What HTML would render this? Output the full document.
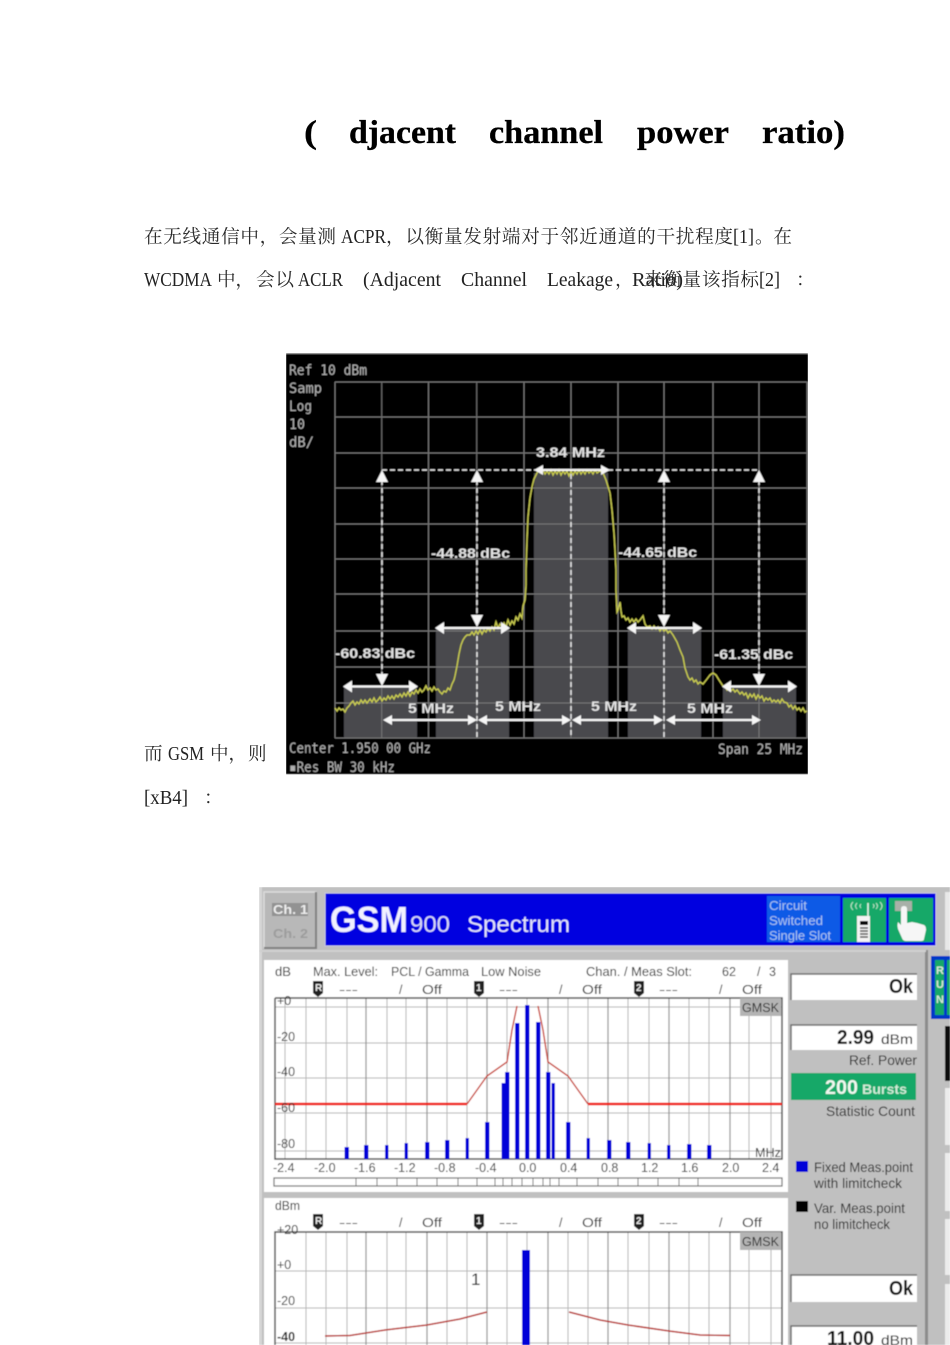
<!DOCTYPE html>
<html><head><meta charset="utf-8"><title>ACPR</title>
<style>
html,body{margin:0;padding:0;background:#fff;width:950px;height:1345px;overflow:hidden}
svg{display:block;position:absolute;left:0;top:0}
.t{font-family:"Liberation Serif","Noto Serif CJK SC",serif;font-size:20px;fill:#222}
.c{font-family:"Noto Serif CJK SC","Liberation Serif",serif;font-size:18.6px;fill:#2a2a2a}
.h{font-family:"Liberation Serif",serif;font-weight:bold;font-size:33px;fill:#000;stroke:#000;stroke-width:.3}
.m{font-family:"DejaVu Sans Mono",monospace;font-size:14px;fill:#b0b0b0}
.b{font-family:"Liberation Sans",sans-serif;font-weight:bold;font-size:14px;fill:#e4e4e4}
.s{font-family:"Liberation Sans",sans-serif;font-size:12.5px;fill:#2c2c2c}
.v{font-family:"Liberation Sans",sans-serif;font-weight:bold;fill:#111}
</style></head><body>
<svg width="950" height="1345" viewBox="0 0 950 1345" xmlns="http://www.w3.org/2000/svg">
<defs>
<filter id="bl" x="0" y="0" width="1" height="1"><feGaussianBlur stdDeviation="0.5"/></filter>
<filter id="bk" x="0" y="0" width="1" height="1"><feGaussianBlur stdDeviation="0.4"/></filter>
<filter id="bs" x="-2%" y="-2%" width="104%" height="104%"><feGaussianBlur stdDeviation="0.3"/></filter>
</defs>

<!-- page text -->
<g filter="url(#bs)">
<text class="h" x="304" y="143" textLength="13" lengthAdjust="spacingAndGlyphs">(</text>
<text class="h" x="349" y="143" textLength="107" lengthAdjust="spacingAndGlyphs">djacent</text>
<text class="h" x="489" y="143" textLength="114" lengthAdjust="spacingAndGlyphs">channel</text>
<text class="h" x="637" y="143" textLength="92" lengthAdjust="spacingAndGlyphs">power</text>
<text class="h" x="762" y="143" textLength="83" lengthAdjust="spacingAndGlyphs">ratio)</text>

<text class="c" x="144" y="243" textLength="192">在无线通信中，会量测</text>
<text class="t" x="341" y="243" textLength="45" lengthAdjust="spacingAndGlyphs">ACPR</text>
<text class="c" x="386" y="243" textLength="347">，以衡量发射端对于邻近通道的干扰程度</text>
<text class="t" x="733" y="243" textLength="21" lengthAdjust="spacingAndGlyphs">[1]</text>
<text class="c" x="755" y="243" textLength="37">。在</text>

<text class="t" x="144" y="286" textLength="68" lengthAdjust="spacingAndGlyphs">WCDMA</text>
<text class="c" x="217" y="286" textLength="37">中，</text>
<text class="c" x="256" y="286" textLength="38">会以</text>
<text class="t" x="298" y="286" textLength="45" lengthAdjust="spacingAndGlyphs">ACLR</text>
<text class="t" x="363" y="286" textLength="78" lengthAdjust="spacingAndGlyphs">(Adjacent</text>
<text class="t" x="461" y="286" textLength="66" lengthAdjust="spacingAndGlyphs">Channel</text>
<text class="t" x="547" y="286" textLength="66" lengthAdjust="spacingAndGlyphs">Leakage</text>
<text class="c" x="615" y="286">，</text>
<text class="t" x="632" y="286" textLength="51" lengthAdjust="spacingAndGlyphs">Ratio)</text>
<text class="c" x="644" y="286" textLength="115">来衡量该指标</text>
<text class="t" x="759" y="286" textLength="21" lengthAdjust="spacingAndGlyphs">[2]</text>
<text class="c" x="796" y="286">：</text>

<text class="c" x="144" y="760">而</text>
<text class="t" x="168" y="760" textLength="36" lengthAdjust="spacingAndGlyphs">GSM</text>
<text class="c" x="210" y="760" textLength="37">中，</text>
<text class="c" x="248" y="760">则</text>
<text class="t" x="144" y="804" textLength="44" lengthAdjust="spacingAndGlyphs">[xB4]</text>
<text class="c" x="204" y="804">：</text>
</g>

<!-- chart 1 -->
<g filter="url(#bl)">
<rect x="286" y="353" width="522" height="421" fill="#000"/>
<rect x="286" y="353" width="522" height="1" fill="#888"/>
<g fill="#48494e">
<rect x="534" y="473" width="74" height="265"/>
<rect x="436" y="628" width="73" height="110"/>
<rect x="628" y="628" width="73" height="110"/>
<rect x="344" y="686" width="73" height="52"/>
<rect x="723" y="686" width="73" height="52"/>
</g>
<g stroke="#787878" stroke-width="1" fill="none">
<path d="M335 382H807M335 417H807M335 453H807M335 488H807M335 524H807M335 559H807M335 594H807M335 631H807M335 667H807M335 703H807M335 738H807"/>
<path d="M335 382V738M381.7 382V738M428.5 382V738M476.7 382V738M524 382V738M571 382V738M618 382V738M664 382V738M713 382V738M759 382V738M807 382V738"/>
</g>
<!-- dashed -->
<g stroke="#e8e8e8" stroke-width="1.5" fill="none" stroke-dasharray="5 3">
<path d="M382 470H535M608 470H759"/>
<path d="M382 480V678M477 480V620M664 480V620M759 480V678"/>
<path d="M571 474V738M477 636V738M664 636V738"/>
</g>
<!-- trace -->
<polyline fill="none" stroke="#c8ca50" stroke-width="1.4" points="335,708 337,711 339,708 341,710 343,709 345,712 347,708 349,706 351,703 353,701 355,705 357,702 359,704 361,700 363,703 365,700 367,703 370,699 372,702 374,698 376,702 378,700 380,697 382,701 384,698 386,700 388,696 390,699 392,696 394,699 396,695 398,697 400,694 402,697 404,693 406,696 408,692 410,696 412,692 414,694 416,690 418,693 420,689 422,692 424,690 426,686 428,690 430,688 432,691 434,687 436,690 438,689 440,692 442,694 444,691 446,692 448,688 450,690 452,684 454,680 455,676 457,666 459,654 461,645 463,640 465,637 467,635 470,635 472,632 474,635 476,631 478,634 480,630 482,634 484,630 486,632 488,628 490,631 492,627 494,630 496,622 498,628 500,624 502,627 504,623 506,627 508,620 510,625 512,621 514,624 516,617 518,620 520,614 522,618 523,606 525,600 526,585 526,570 527,540 528,517 530,498 532,487 534,479 537,473 539,470 541,473 543,470 545,474 547,471 549,474 551,470 553,475 555,471 557,474 559,470 561,475 563,471 565,474 567,471 569,476 571,471 573,475 575,471 577,474 579,470 581,474 583,471 585,474 587,470 589,473 591,471 593,474 595,470 597,473 600,471 603,473 606,480 610,493 612,510 614,533 615,550 616,570 616,590 617,612 618,610 620,602 621,611 622,617 624,616 626,620 628,618 630,622 632,619 634,622 636,619 638,622 640,620 643,616 645,624 647,627 650,626 652,629 654,626 656,629 658,627 660,631 662,628 664,631 666,629 668,633 670,631 673,635 677,642 680,650 683,657 685,668 688,677 690,680 692,678 694,682 696,680 698,684 700,682 703,684 707,679 710,675 713,673 716,675 719,680 723,686 725,686 727,690 729,687 731,691 733,689 735,692 737,690 740,694 742,692 744,695 746,693 748,698 750,694 752,697 754,694 756,699 758,695 760,698 762,696 764,701 766,698 768,700 770,698 772,702 774,700 776,702 778,700 780,703 782,699 784,702 787,703 789,707 791,705 793,709 795,706 797,710 799,708 801,711 803,708 805,712 807,711"/>
<!-- arrows -->
<g stroke="#f6f6f6" stroke-width="2.2" fill="#f6f6f6">
<path d="M540 470H604M441 628H504M633 628H696M349 686.5H412M728 686.5H791M389 720H471M483 720H565M578 720H657M672 720H755"/>
<g stroke="none">
<path d="M534 470l9-5v10zM610 470l-9-5v10zM435 628l9-6v12zM510 628l-9-6v12zM627 628l9-6v12zM702 628l-9-6v12zM343 686.5l9-6v12zM418 686.5l-9-6v12zM722 686.5l9-6v12zM797 686.5l-9-6v12z"/>
<path d="M383 720l9-5v10zM477 720l-9-5v10zM478 720l9-5v10zM571 720l-9-5v10zM572 720l9-5v10zM663 720l-9-5v10zM666 720l9-5v10zM761 720l-9-5v10z"/>
<path d="M382 470l-6 12h12zM477 470l-6 12h12zM664 470l-6 12h12zM759 470l-6 12h12z"/>
<path d="M382 686l-6-12h12zM477 627l-6-12h12zM664 627l-6-12h12zM759 686l-6-12h12z"/>
</g>
</g>
<g>
<text class="m" x="289" y="375" textLength="78" lengthAdjust="spacingAndGlyphs">Ref 10 dBm</text>
<text class="m" x="289" y="393" textLength="33" lengthAdjust="spacingAndGlyphs">Samp</text>
<text class="m" x="289" y="411" textLength="23" lengthAdjust="spacingAndGlyphs">Log</text>
<text class="m" x="289" y="429" textLength="16" lengthAdjust="spacingAndGlyphs">10</text>
<text class="m" x="289" y="447" textLength="25" lengthAdjust="spacingAndGlyphs">dB/</text>
<text class="m" x="289" y="753" textLength="142" lengthAdjust="spacingAndGlyphs">Center 1.950 00 GHz</text>
<text class="m" x="289" y="772" textLength="106" lengthAdjust="spacingAndGlyphs">▪Res BW 30 kHz</text>
<text class="m" x="718" y="754" textLength="85" lengthAdjust="spacingAndGlyphs">Span 25 MHz</text>
<text class="b" x="536" y="457" textLength="69" lengthAdjust="spacingAndGlyphs">3.84 MHz</text>
<text class="b" x="431" y="558" textLength="79" lengthAdjust="spacingAndGlyphs">-44.88 dBc</text>
<text class="b" x="618" y="557" textLength="79" lengthAdjust="spacingAndGlyphs">-44.65 dBc</text>
<text class="b" x="335" y="658" textLength="80" lengthAdjust="spacingAndGlyphs">-60.83 dBc</text>
<text class="b" x="714" y="659" textLength="79" lengthAdjust="spacingAndGlyphs">-61.35 dBc</text>
<text class="b" x="408" y="713" textLength="46" lengthAdjust="spacingAndGlyphs">5 MHz</text>
<text class="b" x="495" y="711" textLength="46" lengthAdjust="spacingAndGlyphs">5 MHz</text>
<text class="b" x="591" y="711" textLength="46" lengthAdjust="spacingAndGlyphs">5 MHz</text>
<text class="b" x="687" y="713" textLength="46" lengthAdjust="spacingAndGlyphs">5 MHz</text>
</g>
</g>

<!-- chart 2 -->
<g filter="url(#bk)">
<rect x="259" y="887" width="691" height="458" fill="#c0c0c0"/>
<rect x="259" y="887" width="3" height="458" fill="#d6d6d6"/>
<!-- top row -->
<rect x="264" y="892" width="52" height="56" fill="#b8b8b8" stroke="#dcdcdc" stroke-width="1.5"/>
<path d="M316 892V948H264" stroke="#808080" stroke-width="2" fill="none"/>
<rect x="272" y="903" width="36" height="13" fill="#929292"/>
<text class="s" x="273" y="914" textLength="35" lengthAdjust="spacingAndGlyphs" style="font-weight:bold;fill:#eee">Ch. 1</text>
<text class="s" x="273" y="938" textLength="35" lengthAdjust="spacingAndGlyphs" style="font-weight:bold;fill:#9c9c9c">Ch. 2</text>
<rect x="325" y="893" width="611" height="53" fill="#0000e0" stroke="#c8c8e0" stroke-width="1"/>
<text x="330" y="932" textLength="78" lengthAdjust="spacingAndGlyphs" style="font-family:'Liberation Sans',sans-serif;font-weight:bold;font-size:36px;fill:#f0f0ff">GSM</text>
<text x="410" y="932" textLength="40" lengthAdjust="spacingAndGlyphs" style="font-family:'Liberation Sans',sans-serif;font-size:23px;fill:#d8d8f8">900</text>
<text x="467" y="932" textLength="103" lengthAdjust="spacingAndGlyphs" style="font-family:'Liberation Sans',sans-serif;font-size:23px;fill:#e4e4fa">Spectrum</text>
<rect x="767" y="896" width="73" height="46" fill="#0a5ae6"/>
<g style="font-family:'Liberation Sans',sans-serif;font-size:13px;fill:#a8c4f0">
<text x="769" y="910" textLength="38" lengthAdjust="spacingAndGlyphs">Circuit</text>
<text x="769" y="925" textLength="54" lengthAdjust="spacingAndGlyphs">Switched</text>
<text x="769" y="940" textLength="62" lengthAdjust="spacingAndGlyphs">Single Slot</text>
</g>
<rect x="843" y="898" width="43" height="44" fill="#12a868"/>
<rect x="889" y="898" width="44" height="44" fill="#12a868"/>
<path d="M853 902q-4 4 0 8M857 903q-3 3 0 6M861 904q-2 2 0 4M880 902q4 4 0 8M876 903q3 3 0 6M873 904q2 2 0 4" stroke="#b8e4c8" stroke-width="1" fill="none"/>
<path d="M868 903V918" stroke="#e8f4e8" stroke-width="1.6"/>
<rect x="857" y="916" width="13" height="26" fill="#f4f4f4"/>
<rect x="860" y="921" width="8" height="4" fill="#111"/>
<path d="M860 928h8M860 931h8M860 934h8M860 937h8" stroke="#555" stroke-width="1.4"/>
<rect x="895" y="901" width="17" height="10" fill="#a8b0a8"/>
<path d="M901 909q0-3 3-3t3 3v14l5-1 5 1 7 2q2 1 2 5l-2 9q0 2-3 2h-15q-3 0-4-3l-4-9q-1-4 0-7l3 3z" fill="#f6f6f6"/>
<!-- separators -->
<rect x="925" y="950" width="3" height="395" fill="#8c8c8c"/>
<rect x="259" y="950" width="667" height="2" fill="#d0d0d0"/>
<rect x="945" y="892" width="5" height="58" fill="#e8e8e8"/>
<rect x="931" y="956" width="19" height="63" fill="#0038c8"/>
<rect x="935" y="960" width="9" height="55" fill="#12a868"/>
<rect x="947" y="960" width="3" height="55" fill="#12a868"/>
<text x="936" y="974" style="font-family:'Liberation Sans',sans-serif;font-weight:bold;font-size:11px;fill:#d8e8d8">R</text>
<text x="936" y="988" style="font-family:'Liberation Sans',sans-serif;font-weight:bold;font-size:11px;fill:#d8e8d8">U</text>
<text x="936" y="1003" style="font-family:'Liberation Sans',sans-serif;font-weight:bold;font-size:11px;fill:#d8e8d8">N</text>
<rect x="945" y="1026" width="5" height="55" fill="#111"/>
<rect x="945" y="1088" width="5" height="57" fill="#ececec"/>
<rect x="945" y="1153" width="5" height="58" fill="#ececec"/>
<rect x="945" y="1219" width="5" height="56" fill="#ececec"/>
<rect x="945" y="1284" width="5" height="61" fill="#ececec"/>

<!-- white panels -->
<rect x="264" y="960" width="524" height="232" fill="#fff"/>
<rect x="264" y="1198" width="524" height="147" fill="#fff"/>

<!-- graph 1 grid -->
<g stroke="#b4b4b4" stroke-width="1" fill="none">
<path d="M275 1007H782M275 1043H782M275 1078H782M275 1113H782M275 1151H782"/>
<path d="M285 998V1159M306 998V1159M326 998V1159M347 998V1159M387 998V1159M406 998V1159M447 998V1159M467 998V1159M507 998V1159M527 998V1159M568 998V1159M588 998V1159M628 998V1159M649 998V1159M689 998V1159M709 998V1159M749 998V1159M771 998V1159"/>
</g>
<path d="M366 998V1159M427 998V1159M487 998V1159M548 998V1159M608 998V1159M669 998V1159M730 998V1159" stroke="#909090" stroke-width="1.2" fill="none"/>
<path d="M275 998V1159H782V998H275" stroke="#505050" stroke-width="1.5" fill="none"/>
<rect x="740" y="998" width="41" height="18" fill="#b4b4b4"/>
<!-- red -->
<path d="M467 1104L487 1076L507 1062L512 1030L517 1006M538 1006L543 1030L548 1062L568 1076L588 1104" fill="none" stroke="#c83828" stroke-width="1.4"/>
<path d="M275 1104H467M588 1104H782" fill="none" stroke="#f01808" stroke-width="2.4"/>
<!-- bars -->
<g fill="#0000d8">
<rect x="344.500" y="1147" width="4.5" height="12"/><rect x="364" y="1145" width="4.500" height="14"/><rect x="385" y="1145" width="3.500" height="14"/><rect x="404.500" y="1143" width="3.500" height="16"/><rect x="425" y="1142" width="4.500" height="17"/><rect x="445" y="1140" width="4.500" height="19"/><rect x="465.500" y="1138" width="3.500" height="21"/><rect x="485" y="1122" width="4.500" height="37"/><rect x="501.500" y="1083" width="3.500" height="76"/><rect x="505" y="1072" width="4.500" height="87"/><rect x="515" y="1023" width="4.500" height="136"/><rect x="525" y="1005" width="4.500" height="154"/><rect x="536" y="1022" width="4.500" height="137"/><rect x="546" y="1072" width="4.500" height="87"/><rect x="551.500" y="1083" width="3.500" height="76"/><rect x="566" y="1122" width="4.500" height="37"/><rect x="586.500" y="1138" width="3.500" height="21"/><rect x="607" y="1140" width="4.500" height="19"/><rect x="626" y="1142" width="4.500" height="17"/><rect x="647.500" y="1143" width="3.500" height="16"/><rect x="667" y="1145" width="3.500" height="14"/><rect x="687" y="1144" width="4.500" height="15"/><rect x="707" y="1145" width="4.500" height="14"/>
</g>
<!-- x scale bar -->
<rect x="274" y="1178" width="508" height="8" fill="#fff" stroke="#707070" stroke-width="1.2"/>
<path d="M356 1178v8M377 1178v8M397 1178v8M417 1178v8M437 1178v8M458 1178v8M477 1178v8M495 1178v8M503 1178v8M512 1178v8M522 1178v8M533 1178v8M543 1178v8M550 1178v8M559 1178v8M577 1178v8M598 1178v8M618 1178v8M638 1178v8M658 1178v8M679 1178v8M698 1178v8" stroke="#707070" stroke-width="1"/>
<!-- labels -->
<g class="s">
<text class="s" x="275" y="976" textLength="16" lengthAdjust="spacingAndGlyphs">dB</text>
<text class="s" x="313" y="976" textLength="65" lengthAdjust="spacingAndGlyphs">Max. Level:</text>
<text class="s" x="391" y="976" textLength="78" lengthAdjust="spacingAndGlyphs">PCL / Gamma</text>
<text class="s" x="481" y="976" textLength="60" lengthAdjust="spacingAndGlyphs">Low Noise</text>
<text class="s" x="586" y="976" textLength="106" lengthAdjust="spacingAndGlyphs">Chan. / Meas Slot:</text>
<text class="s" x="722" y="976">62</text><text class="s" x="757" y="976">/</text><text class="s" x="769" y="976">3</text>
<text class="s" x="339" y="994" textLength="19" lengthAdjust="spacingAndGlyphs">---</text><text class="s" x="399" y="994">/</text><text class="s" x="422" y="994" textLength="20" lengthAdjust="spacingAndGlyphs">Off</text>
<text class="s" x="499" y="994" textLength="19" lengthAdjust="spacingAndGlyphs">---</text><text class="s" x="559" y="994">/</text><text class="s" x="582" y="994" textLength="20" lengthAdjust="spacingAndGlyphs">Off</text>
<text class="s" x="659" y="994" textLength="19" lengthAdjust="spacingAndGlyphs">---</text><text class="s" x="719" y="994">/</text><text class="s" x="742" y="994" textLength="20" lengthAdjust="spacingAndGlyphs">Off</text>
<text class="s" x="742" y="1012" textLength="37" lengthAdjust="spacingAndGlyphs">GMSK</text>
<text class="s" x="277" y="1005">+0</text><text class="s" x="277" y="1041">-20</text><text class="s" x="277" y="1076">-40</text><text class="s" x="277" y="1112">-60</text><text class="s" x="277" y="1148">-80</text>
<text class="s" x="755" y="1157" textLength="26" lengthAdjust="spacingAndGlyphs">MHz</text>
<text class="s" x="273" y="1172">-2.4</text><text class="s" x="314" y="1172">-2.0</text><text class="s" x="354" y="1172">-1.6</text><text class="s" x="394" y="1172">-1.2</text><text class="s" x="434" y="1172">-0.8</text><text class="s" x="475" y="1172">-0.4</text><text class="s" x="519" y="1172">0.0</text><text class="s" x="560" y="1172">0.4</text><text class="s" x="601" y="1172">0.8</text><text class="s" x="641" y="1172">1.2</text><text class="s" x="681" y="1172">1.6</text><text class="s" x="722" y="1172">2.0</text><text class="s" x="762" y="1172">2.4</text>
</g>
<!-- markers -->
<g fill="#222">
<path d="M313 981h10v12l-5 4-5-4z"/><path d="M474 981h10v12l-5 4-5-4z"/><path d="M634 981h10v12l-5 4-5-4z"/>
<path d="M313 1214h10v12l-5 4-5-4z"/><path d="M474 1214h10v12l-5 4-5-4z"/><path d="M634 1214h10v12l-5 4-5-4z"/>
</g>
<g style="font-family:'Liberation Sans',sans-serif;font-weight:bold;font-size:10px;fill:#eee">
<text x="315" y="991">R</text><text x="476" y="991">1</text><text x="636" y="991">2</text>
<text x="315" y="1224">R</text><text x="476" y="1224">1</text><text x="636" y="1224">2</text>
</g>

<!-- graph 2 -->
<g stroke="#b4b4b4" stroke-width="1" fill="none">
<path d="M275 1271H782M275 1308H782M275 1343H782"/>
<path d="M306 1232V1345M326 1232V1345M347 1232V1345M387 1232V1345M406 1232V1345M447 1232V1345M467 1232V1345M507 1232V1345M527 1232V1345M568 1232V1345M588 1232V1345M628 1232V1345M649 1232V1345M689 1232V1345M709 1232V1345M749 1232V1345M771 1232V1345"/>
</g>
<path d="M366 1232V1345M427 1232V1345M487 1232V1345M548 1232V1345M608 1232V1345M669 1232V1345M730 1232V1345" stroke="#909090" stroke-width="1.2" fill="none"/>
<path d="M275 1345V1232H782V1345" stroke="#505050" stroke-width="1.5" fill="none"/>
<rect x="740" y="1232" width="41" height="18" fill="#b4b4b4"/>
<rect x="522" y="1250" width="8" height="95" fill="#0000d8"/>
<path d="M325 1336L350 1335.5L385 1330L427 1325L460 1319L487 1312M569 1312L600 1320L628 1325L669 1331L700 1335L730 1335.5" stroke="#b82820" stroke-width="1.5" fill="none"/>
<text class="s" x="275" y="1210" textLength="25" lengthAdjust="spacingAndGlyphs">dBm</text>
<text class="s" x="277" y="1234">+20</text><text class="s" x="277" y="1269">+0</text><text class="s" x="277" y="1305">-20</text><text class="s" x="277" y="1341" style="font-weight:bold">-40</text>
<text class="s" x="339" y="1227" textLength="19" lengthAdjust="spacingAndGlyphs">---</text><text class="s" x="399" y="1227">/</text><text class="s" x="422" y="1227" textLength="20" lengthAdjust="spacingAndGlyphs">Off</text>
<text class="s" x="499" y="1227" textLength="19" lengthAdjust="spacingAndGlyphs">---</text><text class="s" x="559" y="1227">/</text><text class="s" x="582" y="1227" textLength="20" lengthAdjust="spacingAndGlyphs">Off</text>
<text class="s" x="659" y="1227" textLength="19" lengthAdjust="spacingAndGlyphs">---</text><text class="s" x="719" y="1227">/</text><text class="s" x="742" y="1227" textLength="20" lengthAdjust="spacingAndGlyphs">Off</text>
<text class="s" x="742" y="1246" textLength="37" lengthAdjust="spacingAndGlyphs">GMSK</text>
<text x="471" y="1285" style="font-family:'Liberation Sans',sans-serif;font-size:17px;fill:#222">1</text>

<!-- right column -->
<g fill="#fff" stroke="none">
<rect x="791" y="974" width="126" height="26"/><rect x="791" y="1025" width="126" height="25"/><rect x="791" y="1275" width="126" height="27"/><rect x="791" y="1326" width="126" height="19"/>
</g>
<path d="M791 1000V974H917M791 1050V1025H917M791 1302V1275H917M791 1345V1326H917" stroke="#6c6c6c" stroke-width="1.5" fill="none"/>
<text class="v" x="889" y="993" textLength="24" lengthAdjust="spacingAndGlyphs" style="font-size:20px">Ok</text>
<text class="v" x="837" y="1044" textLength="37" lengthAdjust="spacingAndGlyphs" style="font-size:20px">2.99</text>
<text class="v" x="881" y="1044" textLength="32" lengthAdjust="spacingAndGlyphs" style="font-size:14px;font-weight:normal">dBm</text>
<text class="s" x="849" y="1065" textLength="68" lengthAdjust="spacingAndGlyphs" style="font-size:14px">Ref. Power</text>
<rect x="791" y="1073" width="125" height="27" fill="#12a868"/>
<text class="v" x="825" y="1094" textLength="33" lengthAdjust="spacingAndGlyphs" style="font-size:20px;fill:#f0f8f0">200</text>
<text class="v" x="862" y="1094" textLength="45" lengthAdjust="spacingAndGlyphs" style="font-size:14px;fill:#d0ecd8">Bursts</text>
<text class="s" x="826" y="1116" textLength="89" lengthAdjust="spacingAndGlyphs" style="font-size:14px">Statistic Count</text>
<rect x="796" y="1161" width="12" height="11" fill="#0000d8"/>
<text class="s" x="814" y="1172" textLength="99" lengthAdjust="spacingAndGlyphs" style="font-size:14px">Fixed Meas.point</text>
<text class="s" x="814" y="1188" textLength="88" lengthAdjust="spacingAndGlyphs" style="font-size:14px">with limitcheck</text>
<rect x="796" y="1201" width="12" height="11" fill="#000"/>
<text class="s" x="814" y="1213" textLength="91" lengthAdjust="spacingAndGlyphs" style="font-size:14px">Var. Meas.point</text>
<text class="s" x="814" y="1229" textLength="76" lengthAdjust="spacingAndGlyphs" style="font-size:14px">no limitcheck</text>
<text class="v" x="889" y="1295" textLength="24" lengthAdjust="spacingAndGlyphs" style="font-size:20px">Ok</text>
<text class="v" x="827" y="1345" textLength="47" lengthAdjust="spacingAndGlyphs" style="font-size:20px">11.00</text>
<text class="v" x="881" y="1345" textLength="32" lengthAdjust="spacingAndGlyphs" style="font-size:14px;font-weight:normal">dBm</text>
</g>
</svg>
</body></html>
